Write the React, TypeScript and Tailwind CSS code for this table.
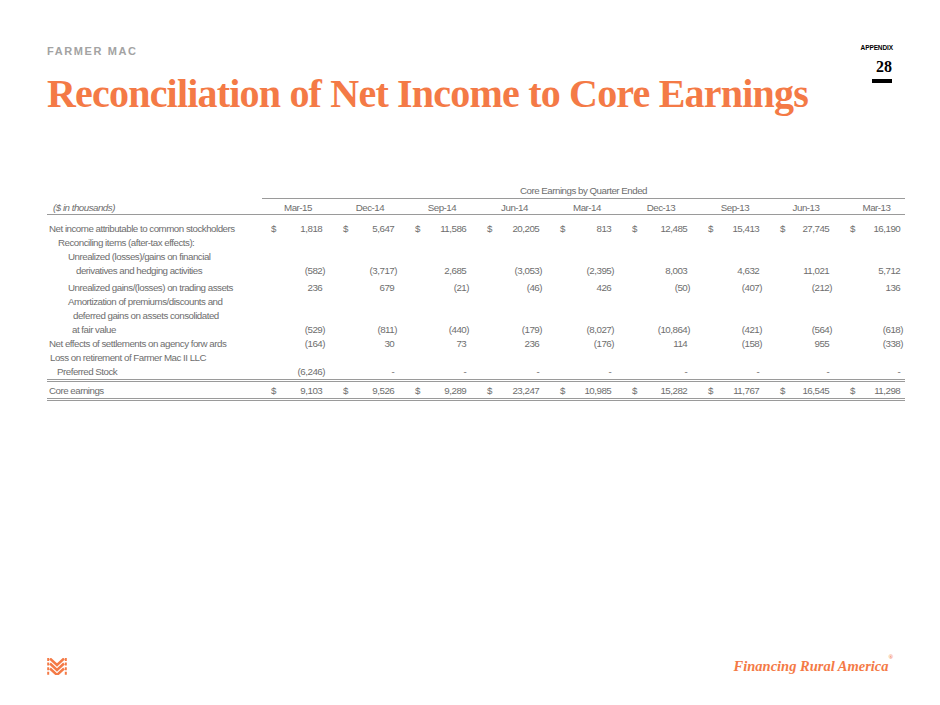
import React from 'react';

const cols = ['Mar-15', 'Dec-14', 'Sep-14', 'Jun-14', 'Mar-14', 'Dec-13', 'Sep-13', 'Jun-13', 'Mar-13'];

type Line = { text: string; indent: string };
type Row = { label: Line[]; values?: string[]; dollar?: boolean; extra?: string };

const rows: Row[] = [
  {
    label: [{ text: 'Net income attributable to common stockholders', indent: 'pl-[2px]' }],
    values: ['1,818', '5,647', '11,586', '20,205', '813', '12,485', '15,413', '27,745', '16,190'],
    dollar: true,
  },
  { label: [{ text: 'Reconciling items (after-tax effects):', indent: 'pl-[11px]' }] },
  {
    label: [
      { text: 'Unrealized (losses)/gains on financial', indent: 'pl-[21px]' },
      { text: 'derivatives and hedging activities', indent: 'pl-[29px]' },
    ],
    values: ['(582)', '(3,717)', '2,685', '(3,053)', '(2,395)', '8,003', '4,632', '11,021', '5,712'],
  },
  {
    label: [{ text: 'Unrealized gains/(losses) on trading assets', indent: 'pl-[21px]' }],
    values: ['236', '679', '(21)', '(46)', '426', '(50)', '(407)', '(212)', '136'],
    extra: 'mt-[3px]',
  },
  {
    label: [
      { text: 'Amortization of premiums/discounts and', indent: 'pl-[21px]' },
      { text: 'deferred gains on assets consolidated', indent: 'pl-[26px]' },
      { text: 'at fair value', indent: 'pl-[25px]' },
    ],
    values: ['(529)', '(811)', '(440)', '(179)', '(8,027)', '(10,864)', '(421)', '(564)', '(618)'],
  },
  {
    label: [{ text: 'Net effects of settlements on agency forw ards', indent: 'pl-[2px]' }],
    values: ['(164)', '30', '73', '236', '(176)', '114', '(158)', '955', '(338)'],
  },
  {
    label: [
      { text: 'Loss on retirement of Farmer Mac II LLC', indent: 'pl-[3px]' },
      { text: 'Preferred Stock', indent: 'pl-[10px]' },
    ],
    values: ['(6,246)', '-', '-', '-', '-', '-', '-', '-', '-'],
  },
];

const core = ['9,103', '9,526', '9,289', '23,247', '10,985', '15,282', '11,767', '16,545', '11,298'];

const grid = 'grid grid-cols-[215px_72px_72px_72px_73px_72px_76px_72px_70px_64px]';

function Num({ v }: { v: string }) {
  const neg = v.startsWith('(');
  return (
    <span>
      {v}
      {!neg && <span className="invisible">)</span>}
    </span>
  );
}

function Cell({ v, dollar, last }: { v?: string; dollar?: boolean; last: boolean }) {
  return (
    <div className={`flex items-end justify-between pl-[9px] ${last ? 'pr-[2px]' : 'pr-[9px]'}`}>
      <span>{dollar ? '$' : ''}</span>
      {v !== undefined && <Num v={v} />}
    </div>
  );
}

function Logo() {
  return (
    <svg width="20" height="17" viewBox="0 0 20 17" fill="none" stroke="#f47a46" strokeWidth="2.4">
      <path d="M1.2 0v17M18.8 0v17" strokeWidth="2" strokeDasharray="3 1.6" />
      <path d="M3 0.5l7 6.5 7-6.5" />
      <path d="M3 5.5l7 6.5 7-6.5" />
      <path d="M3 10.5l7 6.5 7-6.5" />
    </svg>
  );
}

export default function App() {
  return (
    <div className="w-[940px] h-[705px] bg-white flex flex-col overflow-hidden">
      <div className="flex justify-between pt-[44px] pl-[47px] pr-[47px]">
        <div>
          <div className="font-['Liberation_Sans',sans-serif] font-bold text-[11px] leading-[14px] tracking-[1.6px] text-[#a3a3a3]">
            FARMER MAC
          </div>
          <h1 className="mt-[14px] font-['Liberation_Serif',serif] font-bold text-[40px] leading-[44px] tracking-[-0.8px] text-[#f47a46]">
            Reconciliation of Net Income to Core Earnings
          </h1>
        </div>
        <div className="flex flex-col items-end">
          <div className="font-['Liberation_Sans',sans-serif] font-bold text-[6.5px] leading-[8px] tracking-[-0.1px] text-black">
            APPENDIX
          </div>
          <div className="mt-[7px] pr-[1px] font-['Liberation_Serif',serif] font-bold text-[16px] leading-[16px] text-black">
            28
          </div>
          <div className="mt-[4px] mr-[1px] w-[20px] h-[4px] bg-black" />
        </div>
      </div>

      <div className="mt-[68px] ml-[47px] w-[858px] font-['Liberation_Sans',sans-serif] text-[9.75px] tracking-[-0.5px] leading-[14px] text-[#6e6e6e]">
        <div className={grid}>
          <div />
          <div className="col-span-9 text-center border-b border-[#9a9a9a]">Core Earnings by Quarter Ended</div>
        </div>
        <div className={`${grid} border-b border-[#9a9a9a] pt-[3px] leading-[12px]`}>
          <div className="pl-[6px] italic">($ in thousands)</div>
          {cols.map((c, i) => (
            <div key={c} className={`text-center pl-[9px] ${i === 8 ? 'pr-[2px]' : 'pr-[9px]'}`}>
              {c}
            </div>
          ))}
        </div>
        <div className="pt-[7px]">
          {rows.map((r, ri) => (
            <div key={ri} className={`${grid} ${r.extra ?? ''}`}>
              <div>
                {r.label.map((l) => (
                  <div key={l.text} className={`${l.indent} whitespace-nowrap`}>
                    {l.text}
                  </div>
                ))}
              </div>
              {cols.map((c, i) => (
                <Cell key={c} v={r.values?.[i]} dollar={r.dollar} last={i === 8} />
              ))}
            </div>
          ))}
        </div>
        <div className={`${grid} border-t-[3px] border-b-[3px] border-double border-[#9a9a9a] pt-[2px]`}>
          <div className="pl-[2px]">Core earnings</div>
          {cols.map((c, i) => (
            <Cell key={c} v={core[i]} dollar last={i === 8} />
          ))}
        </div>
      </div>

      <div className="mt-auto flex items-center justify-between pl-[47px] pr-[47px] pb-[30px]">
        <Logo />
        <div className="font-['Liberation_Serif',serif] font-bold italic text-[14.5px] leading-[17px] text-[#f47a46]">
          Financing Rural America<sup className="text-[6px] align-top relative top-[-1px]">®</sup>
        </div>
      </div>
    </div>
  );
}
